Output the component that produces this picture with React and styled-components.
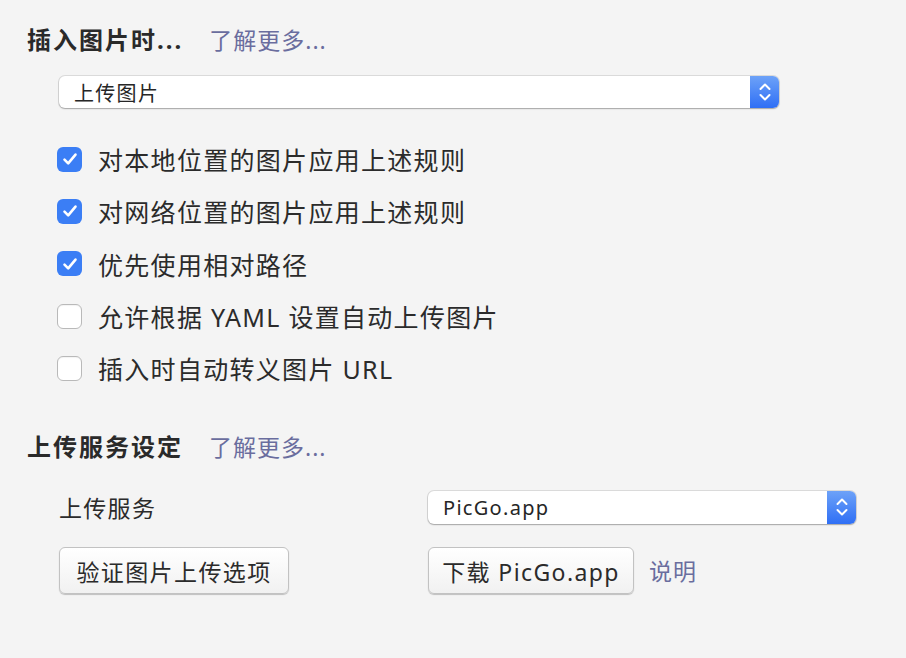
import React from "react";
import styled, { createGlobalStyle } from "styled-components";

const Global = createGlobalStyle`
  html, body { margin: 0; padding: 0; background: #f4f4f4; }
  body {
    font-family: "Noto Sans", "Noto Sans CJK SC", sans-serif;
    color: #2b2b2b;
  }
`;

const Page = styled.div`
  width: 906px;
  height: 658px;
  box-sizing: border-box;
  padding: 23px 27px 0 27px;
  background: #f4f4f4;
`;

const Section = styled.section`
  display: flex;
  flex-direction: column;
  margin-bottom: ${(p) => p.$gap || 0}px;
`;

const Header = styled.div`
  display: flex;
  align-items: center;
  gap: 26px;
  height: 34px;
`;

const Title = styled.h2`
  margin: 0;
  font-size: 24px;
  letter-spacing: 2px;
  font-weight: 700;
  color: #2a2a2a;
  line-height: 34px;
`;

const Link = styled.a`
  font-size: 23px;
  letter-spacing: 1px;
  color: #6a6d9e;
  text-decoration: none;
  line-height: 34px;
  cursor: pointer;
`;

const Indent = styled.div`
  padding-left: 32px;
  display: flex;
  flex-direction: column;
`;

const SelectBox = styled.div`
  box-sizing: border-box;
  width: ${(p) => p.$width}px;
  height: ${(p) => p.$height}px;
  display: flex;
  align-items: stretch;
  background: #fff;
  border-radius: 6px;
  box-shadow: 0 0 0 1px rgba(0,0,0,0.10), 0 1px 1.5px rgba(0,0,0,0.25);
  overflow: hidden;
`;

const SelectText = styled.div`
  flex: 1;
  display: flex;
  align-items: center;
  padding-left: 15px;
  font-size: 20px;
  letter-spacing: 1.3px;
  color: #262626;
`;

const Arrow = styled.div`
  width: 29px;
  display: flex;
  align-items: center;
  justify-content: center;
  background: linear-gradient(#6da2f8, #2f6ff5);
`;

const CheckList = styled.div`
  display: flex;
  flex-direction: column;
  margin-top: 25px;
`;

const CheckRow = styled.label`
  display: flex;
  align-items: center;
  height: 52.3px;
  gap: 16px;
  margin-left: -2px;
  font-size: 25px;
  letter-spacing: 1.3px;
  color: #2b2b2b;
`;

const Box = styled.span`
  box-sizing: border-box;
  width: 25px;
  height: 25px;
  border-radius: 6px;
  display: flex;
  align-items: center;
  justify-content: center;
  background: ${(p) => (p.$checked ? "#3b7ef5" : "#fff")};
  border: ${(p) => (p.$checked ? "none" : "1px solid #b9b9b9")};
  box-shadow: ${(p) => (p.$checked ? "none" : "inset 0 1px 1px rgba(0,0,0,0.05)")};
`;

const Grid = styled.div`
  display: grid;
  grid-template-columns: 369px 1fr;
  row-gap: 23px;
  margin-top: 26px;
  align-items: center;
`;

const Label = styled.div`
  font-size: 23px;
  letter-spacing: 1.3px;
  color: #2b2b2b;
`;

const ButtonRow = styled.div`
  display: flex;
  align-items: center;
  gap: 15px;
`;

const Button = styled.button`
  box-sizing: border-box;
  height: 47px;
  padding: 0;
  font-family: inherit;
  font-size: 23px;
  letter-spacing: 1.4px;
  color: #2b2b2b;
  background: linear-gradient(#ffffff, #f1f1f1);
  border: 1px solid #c2c2c2;
  border-radius: 6px;
  box-shadow: 0 1px 1px rgba(0,0,0,0.22);
  width: ${(p) => p.$width}px;
  text-align: center;
`;

const Check = () => (
  <svg width="18" height="18" viewBox="0 0 18 18">
    <path d="M3.5 9.6 L7.2 13.3 L14.5 4.6" fill="none" stroke="#fff" strokeWidth="2.6" strokeLinecap="round" strokeLinejoin="round" />
  </svg>
);

const Chevrons = () => (
  <svg width="14" height="22" viewBox="0 0 14 22">
    <path d="M2.5 8 L7 3.5 L11.5 8" fill="none" stroke="#fff" strokeWidth="2" strokeLinecap="round" strokeLinejoin="round" />
    <path d="M2.5 14 L7 18.5 L11.5 14" fill="none" stroke="#fff" strokeWidth="2" strokeLinecap="round" strokeLinejoin="round" />
  </svg>
);

const Select = ({ value, width, height }) => (
  <SelectBox $width={width} $height={height}>
    <SelectText>{value}</SelectText>
    <Arrow>
      <Chevrons />
    </Arrow>
  </SelectBox>
);

const options = [
  ["对本地位置的图片应用上述规则", true],
  ["对网络位置的图片应用上述规则", true],
  ["优先使用相对路径", true],
  ["允许根据 YAML 设置自动上传图片", false],
  ["插入时自动转义图片 URL", false],
];

const SelectWrap = styled.div`
  margin-top: 19px;
`;

export default function App() {
  return (
    <>
      <Global />
      <Page>
        <Section $gap={36}>
          <Header>
            <Title>插入图片时...</Title>
            <Link>了解更多...</Link>
          </Header>
          <Indent>
            <SelectWrap>
              <Select value="上传图片" width={720} height={32} />
            </SelectWrap>
            <CheckList>
              {options.map(([text, checked]) => (
                <CheckRow key={text}>
                  <Box $checked={checked}>{checked && <Check />}</Box>
                  <span>{text}</span>
                </CheckRow>
              ))}
            </CheckList>
          </Indent>
        </Section>
        <Section>
          <Header>
            <Title>上传服务设定</Title>
            <Link>了解更多...</Link>
          </Header>
          <Indent>
            <Grid>
              <Label>上传服务</Label>
              <Select value="PicGo.app" width={428} height={33} />
              <div>
                <Button $width={230}>验证图片上传选项</Button>
              </div>
              <ButtonRow>
                <Button $width={206}>下载 PicGo.app</Button>
                <Link>说明</Link>
              </ButtonRow>
            </Grid>
          </Indent>
        </Section>
      </Page>
    </>
  );
}
